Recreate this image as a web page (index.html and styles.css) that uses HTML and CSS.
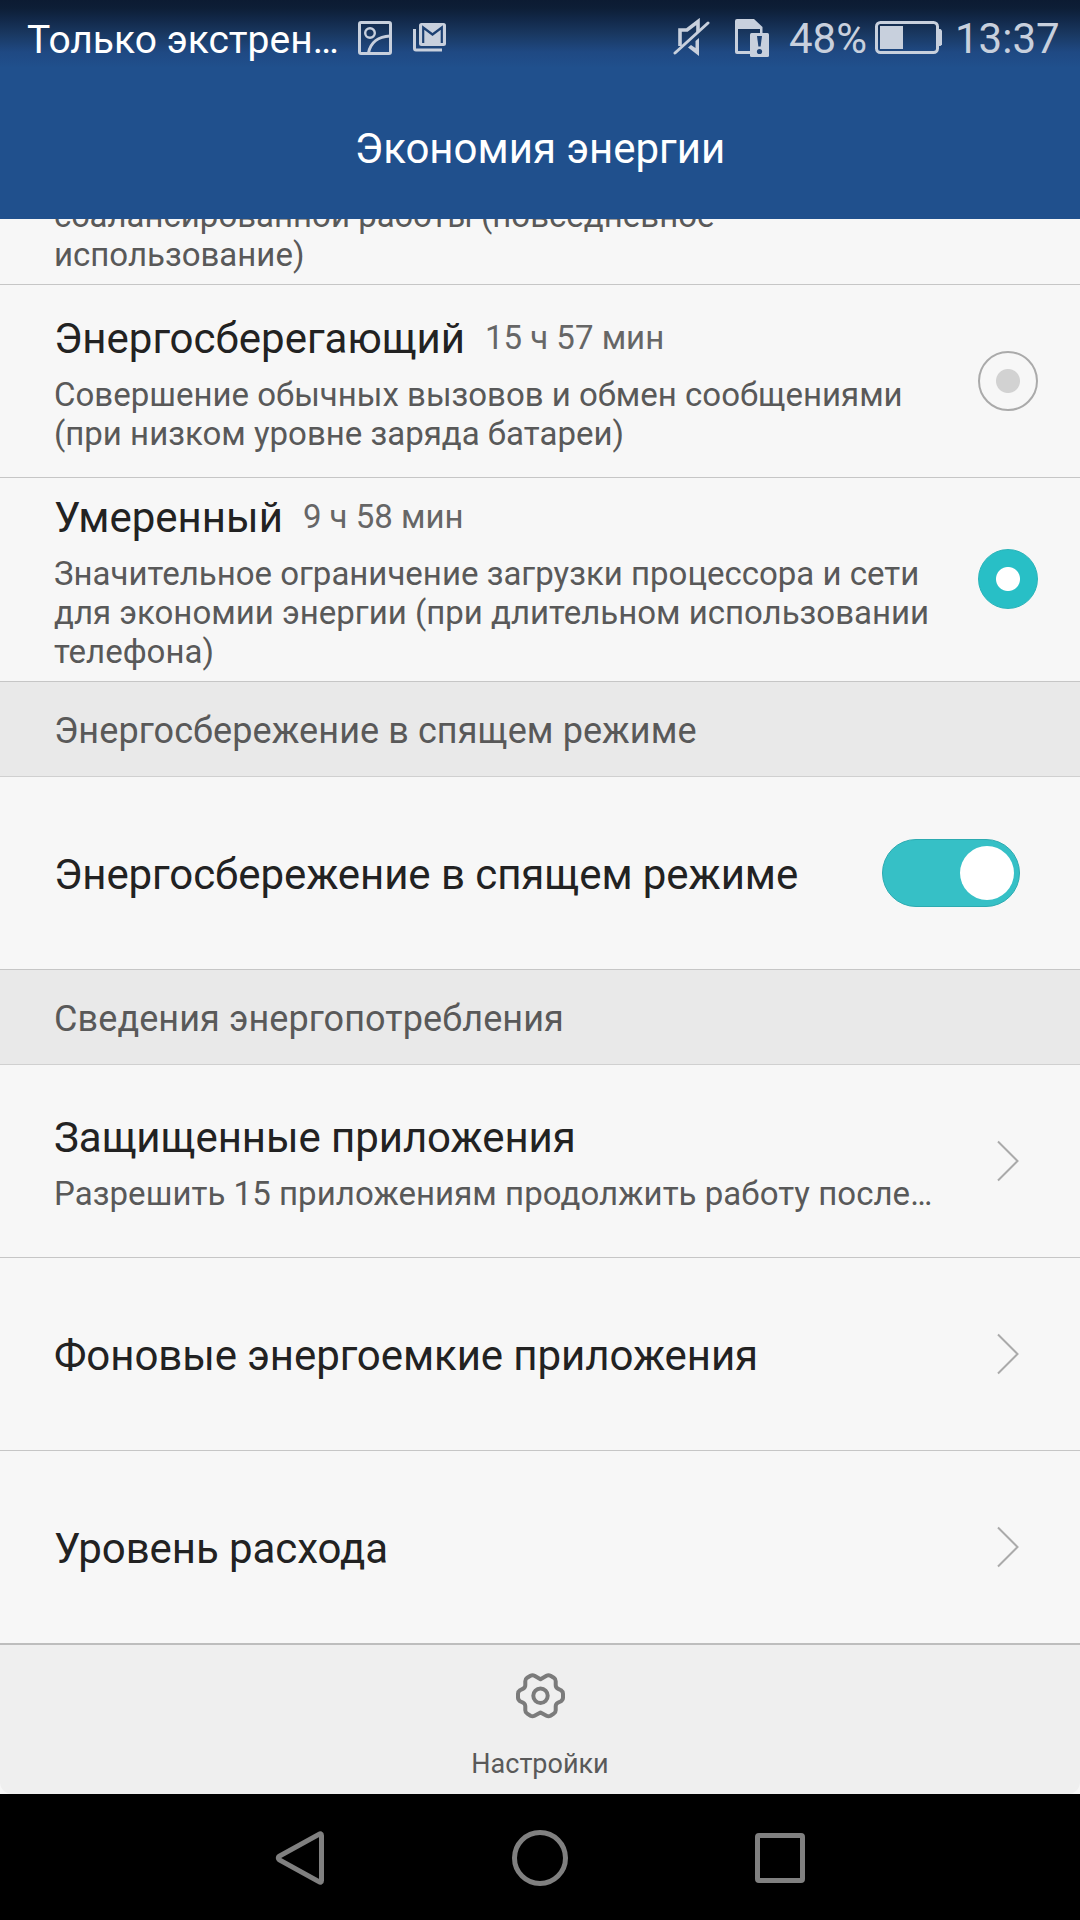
FILE: index.html
```html
<!DOCTYPE html>
<html lang="ru">
<head>
    <meta charset="UTF-8">
    <meta name="viewport" content="width=device-width, initial-scale=1.0">
    <title>Экономия энергии</title>
    <link rel="stylesheet" href="styles.css">
</head>
<body>
    <header class="header">
        <div class="status-bar">
            <span class="carrier">Только экстрен…</span>
            <svg class="icon-image" width="34" height="34" viewBox="0 0 34 34" fill="none" stroke="#c8d0dd" stroke-width="3">
                <rect x="1.5" y="1.5" width="31" height="31" rx="1.5"/>
                <circle cx="12" cy="12" r="4.8" stroke-width="2.4"/>
                <path d="M10.5 32C12.5 21.5 20.5 15.5 32 15"/>
            </svg>
            <svg class="icon-mail" width="33" height="29" viewBox="0 0 33 29">
                <path d="M1.5 6V25.5Q1.5 27 3 27H29" fill="none" stroke="#c8d0dd" stroke-width="3"/>
                <rect x="6" y="0" width="27" height="23" rx="2.5" fill="#c8d0dd"/>
                <path d="M10.2 20V4.5L19.5 11.5L28.8 4.5V20" fill="none" stroke="#1c4072" stroke-width="2.2"/>
            </svg>
            <svg class="icon-mute" width="38" height="40" viewBox="0 0 38 40" fill="none" stroke="#c8d0dd">
                <path d="M7 28V12H14L25 3.5V14" stroke-width="3.6"/>
                <path d="M26 20V38L15 29.5L18 27L22.5 30V23Z" fill="#c8d0dd" stroke="none"/>
                <path d="M2 35L35 5" stroke-width="3" stroke-linecap="round"/>
            </svg>
            <svg class="icon-sim" width="34" height="38" viewBox="0 0 34 38">
                <path d="M2 0H19L27.5 8V14H25V10H3V32H15V35H2Q0 35 0 33V2Q0 0 2 0Z" fill="#c8d0dd"/>
                <rect x="15" y="14" width="19" height="24" rx="1.5" fill="#c8d0dd"/>
                <path d="M22 17H27L25.6 27.5H23.4Z" fill="#1e4274"/>
                <circle cx="24.5" cy="32.5" r="2.6" fill="#1e4274"/>
            </svg>
            <span class="percent">48%</span>
            <svg class="icon-battery" width="67" height="33" viewBox="0 0 67 33">
                <rect x="1.5" y="1.5" width="61" height="30" rx="4" fill="none" stroke="#c8d0dd" stroke-width="3"/>
                <rect x="5" y="5" width="23" height="23" fill="#c8d0dd"/>
                <path d="M63 8H65.5L67 9.5V23.5L65.5 25H63Z" fill="#c8d0dd"/>
            </svg>
            <span class="clock">13:37</span>
        </div>
        <h1>Экономия энергии</h1>
    </header>

    <main class="list">
        <div class="row row-clipped">
            <p class="desc">сбалансированной работы (повседневное<br>использование)</p>
        </div>
        <div class="row plan">
            <div class="plan-text">
                <div class="plan-head"><h2>Энергосберегающий</h2><span class="time">15 ч 57 мин</span></div>
                <p class="desc">Совершение обычных вызовов и обмен сообщениями<br>(при низком уровне заряда батареи)</p>
            </div>
            <span class="radio"></span>
        </div>
        <div class="row plan plan-tall">
            <div class="plan-text">
                <div class="plan-head"><h2>Умеренный</h2><span class="time">9 ч 58 мин</span></div>
                <p class="desc">Значительное ограничение загрузки процессора и сети<br>для экономии энергии (при длительном использовании<br>телефона)</p>
            </div>
            <span class="radio checked"></span>
        </div>

        <div class="section">Энергосбережение в спящем режиме</div>
        <div class="row item">
            <h2>Энергосбережение в спящем режиме</h2>
            <span class="switch"></span>
        </div>

        <div class="section">Сведения энергопотребления</div>
        <div class="row item">
            <div>
                <h2>Защищенные приложения</h2>
                <p class="desc">Разрешить 15 приложениям продолжить работу после…</p>
            </div>
            <svg class="chevron" width="22" height="42" viewBox="0 0 22 42"><path d="M1 1.5L20.5 21L1 40.5"/></svg>
        </div>
        <div class="row item">
            <h2>Фоновые энергоемкие приложения</h2>
            <svg class="chevron" width="22" height="42" viewBox="0 0 22 42"><path d="M1 1.5L20.5 21L1 40.5"/></svg>
        </div>
        <div class="row item last">
            <h2>Уровень расхода</h2>
            <svg class="chevron" width="22" height="42" viewBox="0 0 22 42"><path d="M1 1.5L20.5 21L1 40.5"/></svg>
        </div>
    </main>

    <footer class="toolbar">
        <svg width="51" height="48" viewBox="-0.5 0 51 48" fill="none" stroke="#7b7b7b" stroke-width="4" stroke-linejoin="round">
            <path d="M25 7.2L31 3.7Q33 2.6 35 3.7L38.3 5.7Q40.2 7 40.2 9.2V13Q40.2 15.6 42.3 16.6L45.5 18.2Q47.5 19.5 47.5 21.8V25.6Q47.5 28 45.5 29.2L42.3 30.8Q40.2 31.9 40.2 34.4V38.2Q40.2 40.4 38.3 41.6L35 43.7Q33 44.8 31 43.7L25 40.4L19 43.7Q17 44.8 15 43.7L11.7 41.6Q9.8 40.4 9.8 38.2V34.4Q9.8 31.9 7.7 30.8L4.5 29.2Q2.5 28 2.5 25.6V21.8Q2.5 19.5 4.5 18.2L7.7 16.6Q9.8 15.6 9.8 13V9.2Q9.8 7 11.7 5.7L15 3.7Q17 2.6 19 3.7Z"/>
            <circle cx="25" cy="23.7" r="7.2"/>
        </svg>
        <span>Настройки</span>
    </footer>

    <nav class="nav-bar">
        <svg width="60" height="60" viewBox="0 0 60 60"><path d="M48.8 6.5Q51.5 4.5 51.5 7.5V52.5Q51.5 55.5 48.8 53.5L9.5 32Q7 30 9.5 28Z"/></svg>
        <svg width="60" height="60" viewBox="0 0 60 60"><circle cx="30" cy="30" r="25.5"/></svg>
        <svg width="60" height="60" viewBox="0 0 60 60"><rect x="7.5" y="7.5" width="45" height="45" rx="1.5"/></svg>
    </nav>
</body>
</html>
```
FILE: styles.css
```css
* {
    box-sizing: border-box;
}

body {
    width: 1080px;
    height: 1920px;
    margin: 0;
    overflow: hidden;
    background-color: #f7f7f7;
    font-family: Roboto, sans-serif;
    color: #222222;
}

h1,
h2,
p {
    margin: 0;
    font-weight: 400;
}

.header {
    height: 219px;
    background: linear-gradient(#0c1b32 0, #0d1e36 8px, #12294a 20px, #193861 34px, #1f4983 52px, #20508d 68px);
}

.status-bar {
    display: flex;
    align-items: center;
    height: 75px;
    padding-left: 27px;
    color: #c8d0dd;
    white-space: nowrap;
}

.status-bar svg {
    flex: none;
}

.carrier {
    width: 331px;
    font-size: 39px;
    line-height: 46px;
    padding-top: 5px;
    color: #ffffff;
}

.icon-mail {
    margin-left: 21px;
}

.icon-mute {
    margin-left: 227px;
}

.icon-sim {
    margin-left: 24px;
}

.percent,
.clock {
    font-size: 42px;
    line-height: 50px;
    padding-top: 3px;
}

.percent {
    width: 86px;
    margin-left: 20px;
}

.clock {
    margin-left: 13px;
}

.header h1 {
    font-size: 42px;
    line-height: 50px;
    text-align: center;
    padding-top: 49px;
    color: #ffffff;
}

.list h2 {
    font-size: 42px;
    line-height: 49px;
}

.row {
    display: flex;
    border-bottom: 1px solid #c6c6c6;
    padding-left: 54px;
    white-space: nowrap;
}

.desc {
    font-size: 33px;
    line-height: 39px;
    color: #595959;
}

.row-clipped {
    height: 66px;
    align-items: flex-end;
    padding-bottom: 10px;
    overflow: hidden;
}

.plan {
    height: 193px;
    align-items: center;
    justify-content: space-between;
    padding-right: 42px;
}

.plan-text {
    align-self: flex-start;
    padding-top: 29px;
}

.plan-tall {
    height: 204px;
    padding-bottom: 1px;
}

.plan-tall .plan-text {
    padding-top: 15px;
}

.plan-head {
    display: flex;
    gap: 20px;
    margin-bottom: 12px;
}

.time {
    font-size: 33px;
    line-height: 39px;
    padding-top: 4px;
    color: #666666;
}

.radio {
    width: 60px;
    height: 60px;
    border: 2px solid #aaaaaa;
    border-radius: 50%;
    background: radial-gradient(circle, #d2d2d2 11.5px, transparent 12.5px);
}

.radio.checked {
    border: 1px solid #28b3b9;
    background: radial-gradient(circle, #ffffff 11.5px, #28bfc6 12.5px);
}

.section {
    height: 95px;
    border-bottom: 1px solid #d0d0d0;
    padding: 28px 54px 0;
    background-color: #e9e9e9;
    font-size: 36px;
    line-height: 42px;
    letter-spacing: 0.09px;
    color: #595959;
}

.item {
    height: 193px;
    align-items: center;
    justify-content: space-between;
    padding-right: 60px;
}

.item > :first-child {
    padding-top: 3px;
}

.item h2 {
    letter-spacing: -0.07px;
}

.item .desc {
    margin-top: 12px;
    letter-spacing: 0.05px;
}

.switch {
    width: 138px;
    height: 68px;
    padding: 6px 5px;
    border: 1px solid #2cabb1;
    border-radius: 34px;
    background-color: #36c0c6;
}

.switch::after {
    content: "";
    display: block;
    width: 54px;
    height: 54px;
    margin-left: auto;
    border-radius: 50%;
    background-color: #ffffff;
}

.chevron {
    margin-right: 1px;
}

.chevron path {
    fill: none;
    stroke: #aaaaaa;
    stroke-width: 2;
}

.last {
    height: 194px;
    border-bottom: 2px solid #bdbdbd;
}

.toolbar {
    display: flex;
    flex-direction: column;
    align-items: center;
    height: 149px;
    padding-top: 27px;
    border-radius: 0 0 12px 12px;
    background-color: #efefef;
    font-size: 27px;
    line-height: 32px;
    color: #595959;
}

.toolbar span {
    margin-top: 28px;
}

.nav-bar {
    display: flex;
    height: 126px;
    padding: 34px 180px 0;
    background-color: #000000;
}

.nav-bar svg {
    margin: 0 90px;
    fill: none;
    stroke: #808080;
    stroke-width: 5;
}
```
